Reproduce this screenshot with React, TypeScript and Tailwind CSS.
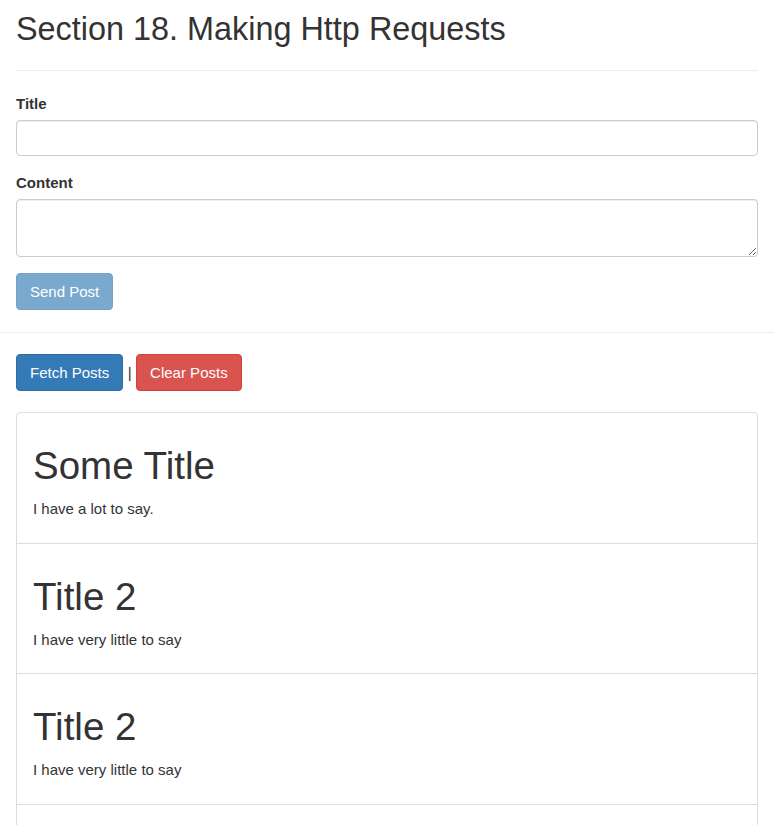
import { useState } from 'react'

type Post = { title: string; content: string }

const initialPosts: Post[] = [
    { title: 'Some Title', content: 'I have a lot to say.' },
    { title: 'Title 2', content: 'I have very little to say' },
    { title: 'Title 2', content: 'I have very little to say' },
    { title: 'Title 2', content: 'I have very little to say' },
]

export default function App() {
    const [title, setTitle] = useState('')
    const [content, setContent] = useState('')
    const [posts, setPosts] = useState<Post[]>(initialPosts)

    const canSend = title.trim() !== '' && content.trim() !== ''

    return (
        <div className="h-[825px] overflow-hidden bg-white text-[#333] font-['Liberation_Sans',Arial,sans-serif] text-[15px] leading-[21px]">
            {/* FORM */}
            <div className="px-4 pt-[12px]">
                <h2 className="text-[32.4px] leading-[35px] font-normal">Section 18. Making Http Requests</h2>
                <hr className="mt-[23px] border-0 border-t border-[#eee]" />

                <div className="mt-[22px] mb-4">
                    <label className="block font-bold mb-[6px]">Title</label>
                    <input
                        type="text"
                        value={title}
                        onChange={e => setTitle(e.target.value)}
                        className="block w-full h-[36px] px-[13px] bg-white border border-[#ccc] rounded-[4px] shadow-[inset_0_1px_1px_rgba(0,0,0,0.075)] focus:outline-none focus:border-[#66afe9]"
                    />
                </div>

                <div className="mb-4">
                    <label className="block font-bold mb-[6px]">Content</label>
                    <textarea
                        value={content}
                        onChange={e => setContent(e.target.value)}
                        className="block w-full h-[58px] px-[13px] py-[6px] bg-white border border-[#ccc] rounded-[4px] shadow-[inset_0_1px_1px_rgba(0,0,0,0.075)] focus:outline-none focus:border-[#66afe9]"
                    />
                </div>

                <button
                    disabled={!canSend}
                    className="h-[37px] px-[13px] rounded-[4px] border border-[#77a0c4] bg-[#7aa9d0] text-white disabled:cursor-not-allowed"
                >
                    Send Post
                </button>
            </div>

            <hr className="mt-[22px] border-0 border-t border-[#eee]" />

            {/* POSTS */}
            <div className="px-4 pt-[21px]">
                <div className="flex items-center">
                    <button
                        onClick={() => setPosts(initialPosts)}
                        className="h-[37px] px-[13px] rounded-[4px] border border-[#2e6da4] bg-[#337ab7] hover:bg-[#286090] text-white"
                    >
                        Fetch Posts
                    </button>
                    <span className="px-[4.5px]">|</span>
                    <button
                        onClick={() => setPosts([])}
                        className="h-[37px] px-[13px] rounded-[4px] border border-[#d43f3a] bg-[#d9534f] hover:bg-[#c9302c] text-white"
                    >
                        Clear Posts
                    </button>
                </div>

                <ul className="mt-[21px]">
                    {posts.map((post, i) => (
                        <li
                            key={i}
                            className="px-4 pt-[11px] pb-[11px] border border-[#ddd] -mb-px first:rounded-t-[4px] last:rounded-b-[4px]"
                        >
                            <h1 className="mt-[21px] mb-[11px] text-[38.5px] leading-[42px] font-normal">{post.title}</h1>
                            <p className="mb-[11px] leading-[22.7px]">{post.content}</p>
                        </li>
                    ))}
                </ul>
            </div>
        </div>
    )
}
